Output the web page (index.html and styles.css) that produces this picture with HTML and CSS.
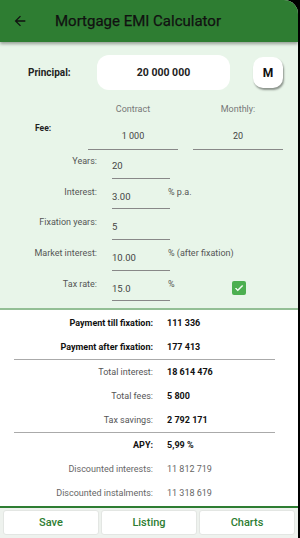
FILE: index.html
```html
<!DOCTYPE html>
<html lang="en">

<head>
    <meta charset="UTF-8" />
    <meta name="viewport" content="width=device-width, initial-scale=1.0" />
    <title>Mortgage EMI Calculator</title>
    <link rel="stylesheet" href="styles.css">
</head>

<body>
    <div class="app">
        <header class="toolbar">
            <svg class="back" width="16" height="16" viewBox="0 0 24 24">
                <path d="M20 11H7.83l5.59-5.59L12 4l-8 8 8 8 1.41-1.41L7.83 13H20v-2z" fill="#111" />
            </svg>
            <h1>Mortgage EMI Calculator</h1>
        </header>

        <section class="form">
            <div class="principal-row">
                <span class="principal-label">Principal:</span>
                <div class="principal-field">20 000 000</div>
                <button class="m-btn">M</button>
            </div>

            <div class="fee-grid">
                <span></span>
                <span class="fee-head">Contract</span>
                <span class="fee-head">Monthly:</span>
                <span class="fee-label">Fee:</span>
                <span class="fee-input">1 000</span>
                <span class="fee-input">20</span>
            </div>

            <div class="params">
                <div class="param">
                    <span class="param-label">Years:</span>
                    <span class="param-input">20</span>
                    <span class="param-suffix"></span>
                </div>
                <div class="param">
                    <span class="param-label">Interest:</span>
                    <span class="param-input">3.00</span>
                    <span class="param-suffix">% p.a.</span>
                </div>
                <div class="param">
                    <span class="param-label">Fixation years:</span>
                    <span class="param-input">5</span>
                    <span class="param-suffix"></span>
                </div>
                <div class="param">
                    <span class="param-label">Market interest:</span>
                    <span class="param-input">10.00</span>
                    <span class="param-suffix">% (after fixation)</span>
                </div>
                <div class="param">
                    <span class="param-label">Tax rate:</span>
                    <span class="param-input">15.0</span>
                    <span class="param-suffix">%
                        <span class="checkbox">
                            <svg width="10" height="10" viewBox="0 0 24 24">
                                <path d="M9 16.17L4.83 12l-1.42 1.41L9 19 21 7l-1.41-1.41z" fill="#fff" stroke="#fff" stroke-width="1.5" />
                            </svg>
                        </span>
                    </span>
                </div>
            </div>
        </section>

        <section class="results">
            <div class="res bold"><span class="res-label">Payment till fixation:</span><span class="res-value">111 336</span></div>
            <div class="res bold"><span class="res-label">Payment after fixation:</span><span class="res-value">177 413</span></div>
            <hr>
            <div class="res"><span class="res-label">Total interest:</span><span class="res-value strong">18 614 476</span></div>
            <div class="res"><span class="res-label">Total fees:</span><span class="res-value strong">5 800</span></div>
            <div class="res"><span class="res-label">Tax savings:</span><span class="res-value strong">2 792 171</span></div>
            <hr>
            <div class="res bold"><span class="res-label">APY:</span><span class="res-value">5,99 %</span></div>
            <div class="res light"><span class="res-label">Discounted interests:</span><span class="res-value">11 812 719</span></div>
            <div class="res light"><span class="res-label">Discounted instalments:</span><span class="res-value">11 318 619</span></div>
        </section>

        <nav class="actions">
            <button>Save</button>
            <button>Listing</button>
            <button>Charts</button>
        </nav>
    </div>
</body>

</html>
```

FILE: styles.css
```css
* {
    margin: 0;
    padding: 0;
    box-sizing: border-box;
}

body {
    font-family: Roboto, "Noto Sans", sans-serif;
    background-color: #000;
    color: #222;
    height: 538px;
    overflow: hidden;
}

.app {
    width: 298px;
    height: 538px;
    display: flex;
    flex-direction: column;
    background-color: #fff;
    border-top-right-radius: 14px;
    overflow: hidden;
}

.toolbar {
    height: 42px;
    flex-shrink: 0;
    background-color: #2e7d32;
    display: flex;
    align-items: center;
    padding-left: 12px;
    box-shadow: 0 2px 3px rgba(0, 0, 0, 0.35);
    position: relative;
    z-index: 1;
}

.back {
    margin-right: 27px;
}

.toolbar h1 {
    font-size: 15px;
    font-weight: 400;
    color: #111;
    -webkit-text-stroke: 0.25px #111;
}

.form {
    background-color: #e8f5e9;
    height: 268px;
    flex-shrink: 0;
    border-bottom: 2px solid #93bf95;
    padding-top: 13px;
}

.principal-row {
    display: flex;
    align-items: center;
    height: 35px;
}

.principal-label {
    width: 97px;
    padding-left: 28px;
    font-size: 10px;
    font-weight: 700;
}

.principal-field {
    width: 133px;
    height: 35px;
    background-color: #fff;
    border-radius: 12px;
    display: flex;
    align-items: center;
    justify-content: center;
    font-size: 10.5px;
    font-weight: 700;
}

.m-btn {
    margin-left: 23px;
    width: 30px;
    height: 31px;
    border: none;
    border-radius: 10px;
    background-color: #fff;
    font-family: inherit;
    font-size: 12px;
    font-weight: 700;
    color: #111;
    box-shadow: 1px 2px 2px rgba(0, 0, 0, 0.4);
}

.fee-grid {
    display: grid;
    grid-template-columns: 73px 90px 90px;
    grid-template-rows: 18px 28px;
    column-gap: 15px;
    margin-top: 14px;
}

.fee-head {
    text-align: center;
    font-size: 9px;
    color: #777;
}

.fee-label {
    font-size: 8.5px;
    font-weight: 700;
    padding-left: 35px;
    padding-top: 1px;
}

.fee-input {
    text-align: center;
    font-size: 9px;
    color: #444;
    padding-top: 9px;
    border-bottom: 1px solid #888;
}

.params {
    margin-top: -2px;
}

.param {
    display: grid;
    grid-template-columns: 97px 58px 1fr;
    column-gap: 15px;
    height: 30.7px;
    font-size: 9px;
}

.param-label {
    text-align: right;
    color: #555;
    padding-top: 8px;
}

.param-input {
    border-bottom: 1px solid #888;
    color: #444;
    padding-top: 12px;
    font-size: 9.5px;
}

.param-suffix {
    color: #555;
    padding-top: 8px;
    margin-left: -17px;
    display: flex;
    align-items: flex-start;
}

.checkbox {
    margin-left: 57px;
    margin-top: 2px;
    width: 14px;
    height: 14px;
    background-color: #4caf50;
    border-radius: 2px;
    display: flex;
    align-items: center;
    justify-content: center;
}

.results {
    flex: 1;
    padding-top: 1px;
}

.res {
    display: grid;
    grid-template-columns: 153px 1fr;
    column-gap: 14px;
    height: 24px;
    align-items: center;
    font-size: 9px;
    color: #555;
}

.res-label {
    text-align: right;
}

.res.bold {
    color: #111;
    font-weight: 700;
}

.res-value.strong {
    color: #111;
    font-weight: 700;
}

.res.light {
    color: #666;
}

.results hr {
    border: none;
    border-top: 1px solid #aaa;
    margin: 0 23px 0 14px;
}

.actions {
    height: 32px;
    flex-shrink: 0;
    border-top: 2px solid #2e7d32;
    background-color: #eef2ee;
    display: flex;
    gap: 2px;
    padding: 2px 3px 3px;
}

.actions button {
    flex: 1;
    background-color: #fff;
    border: 1px solid #e3e6e3;
    border-radius: 3px;
    font-family: inherit;
    font-size: 11px;
    font-weight: 500;
    color: #2e7d32;
}
```
